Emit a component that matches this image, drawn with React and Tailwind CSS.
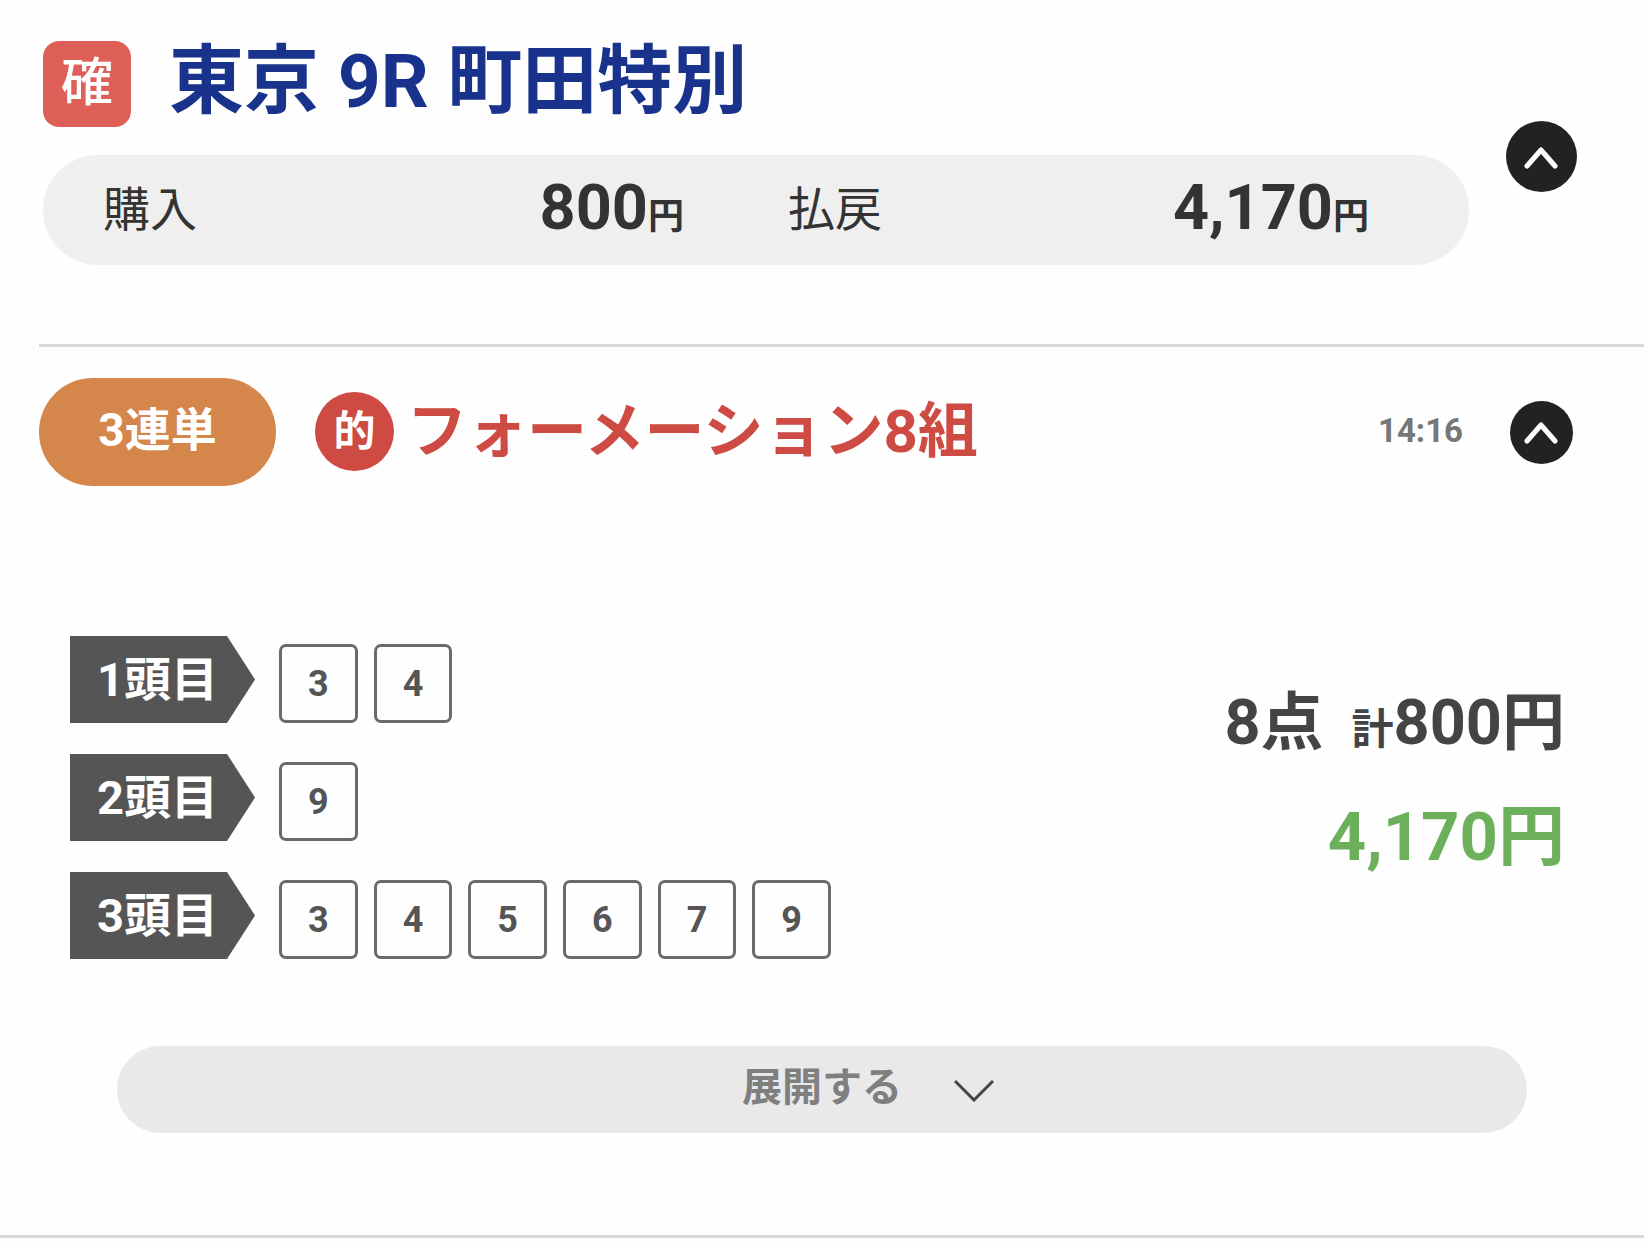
import React from "react";

function Chevron({ up, className, width = 5 }) {
  return (
    <svg viewBox="0 0 40 24" className={className} fill="none" stroke="currentColor" strokeWidth={width} strokeLinecap={up ? "round" : "butt"} strokeLinejoin={up ? "round" : "miter"} aria-hidden="true">
      <path d={up ? "M5 21 L19 5 L33 21" : "M1 3 L20 22 L39 3"} />
    </svg>
  );
}

const picks = [
  { label: "1頭目", horses: [3, 4] },
  { label: "2頭目", horses: [9] },
  { label: "3頭目", horses: [3, 4, 5, 6, 7, 9] },
];

function Amount({ label, value }) {
  return (
    <div className="flex flex-1 items-center justify-between">
      <dt className="text-[47px] leading-[60px]">{label}</dt>
      <dd className="pt-1 text-[63px] leading-[64px] font-bold">
        {value}
        <span className="text-[36px]">円</span>
      </dd>
    </div>
  );
}

function PickRow({ label, horses }) {
  return (
    <li className="flex items-end gap-6">
      <div className="h-[87px] w-[185px] bg-[#555] pt-3 pl-[27px] text-[47px] leading-[64px] font-bold text-white [clip-path:polygon(0_0,157px_0,100%_50%,157px_100%,0_100%)]">
        {label}
      </div>
      <ul className="grid w-[552px] grid-cols-6 gap-4">
        {horses.map((n) => (
          <li key={n} className="flex h-[79px] items-center justify-center rounded-[7px] border-[3px] border-[#6a6a6a] text-[36px] leading-[40px] font-bold text-[#555]">
            {n}
          </li>
        ))}
      </ul>
    </li>
  );
}

export default function App() {
  return (
    <main className="min-h-screen bg-[#fefefe] font-['Roboto','Noto_Sans_CJK_JP',sans-serif] text-[#333]">
      <header className="flex items-start gap-[37px] pt-[41px] pr-[67px] pb-[79px] pl-[43px]">
        <div className="flex-1">
          <div className="flex h-[86px] items-start gap-[38px]">
            <span className="flex h-[86px] w-[88px] items-start justify-center rounded-2xl bg-[#de5f58] pt-[11px] text-[52px] leading-[64px] font-medium text-white">確</span>
            <h1 className="text-[75px] leading-[80px] font-bold whitespace-nowrap text-[#19338d]">東京 9R 町田特別</h1>
          </div>
          <dl className="mt-7 flex h-[110px] items-center gap-[104px] rounded-full bg-[#efefef] pr-[100px] pl-[60px]">
            <Amount label="購入" value="800" />
            <Amount label="払戻" value="4,170" />
          </dl>
        </div>
        <button type="button" aria-label="レースを閉じる" className="mt-20 flex size-[71px] items-center justify-center rounded-full bg-[#222] text-white">
          <Chevron up className="w-10" />
        </button>
      </header>

      <section>
        <div className="ml-[39px] border-t-[3px] border-[#d9d9d9]" />
        <div className="flex items-center pt-[31px] pr-[71px] pl-[39px]">
          <span className="flex h-[108px] w-[237px] justify-center rounded-full bg-[#d5864b] pt-5 text-[46px] leading-[64px] font-bold text-white">3連単</span>
          <span className="mb-[2px] ml-[39px] flex size-[79px] justify-center rounded-full bg-[#cd4b43] pt-2 text-[42px] leading-[64px] font-bold text-white">的</span>
          <h2 className="ml-[13px] flex-1 text-[60px] leading-[64px] font-bold whitespace-nowrap text-[#cd4b43]">フォーメーション8組</h2>
          <time className="mb-[2px] text-[33px] leading-[40px] font-bold text-[#777]">14:16</time>
          <button type="button" aria-label="買い目を閉じる" className="ml-[47px] flex size-[63px] items-center justify-center rounded-full bg-[#222] text-white">
            <Chevron up className="w-10" />
          </button>
        </div>

        <div className="mt-[150px] flex items-start justify-between pr-[79px] pl-[70px]">
          <ul className="flex flex-col gap-[31px]">
            {picks.map((p) => (
              <PickRow key={p.label} label={p.label} horses={p.horses} />
            ))}
          </ul>
          <div className="pt-[51px] text-right font-bold">
            <p className="text-[63px] leading-[72px] text-[#444]">
              8点<span className="ml-7 text-[42px]">計</span>800円
            </p>
            <p className="mt-[35px] text-[67px] leading-[72px] text-[#6db05b]">4,170円</p>
          </div>
        </div>

        <div className="mt-[87px] pr-[117px] pl-[117px]">
          <button type="button" className="flex h-[87px] w-full items-center justify-center gap-[52px] rounded-full bg-[#e9e9e9] pl-[92px] text-[40px] leading-[48px] font-bold text-[#7f7f7f]">
            <span className="pb-1">展開する</span>
            <Chevron className="w-10 text-[#444]" width={3} />
          </button>
        </div>
        <div className="mt-[102px] border-t-[3px] border-[#d9d9d9]" />
      </section>
    </main>
  );
}
